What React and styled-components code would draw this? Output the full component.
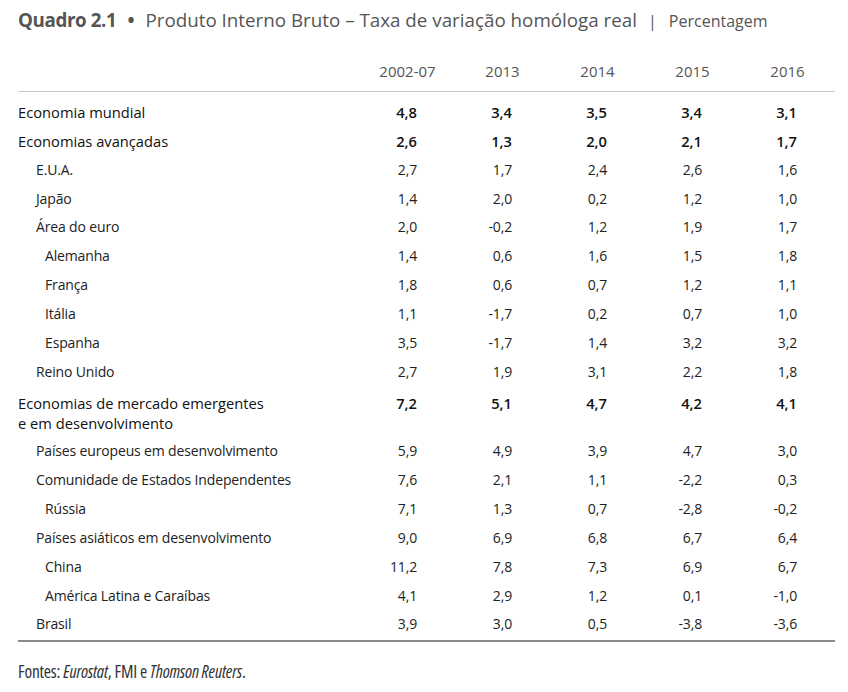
import React from "react";
import styled, { createGlobalStyle } from "styled-components";

const Global = createGlobalStyle`
  html, body { margin: 0; padding: 0; background: #fff; }
  body { font-family: "Open Sans", "Liberation Sans", sans-serif; color: #222; }
`;

const Page = styled.div`
  padding: 7px 0 0 18px;
  width: 817px;
`;

const Title = styled.h1`
  margin: 0;
  font-size: 18.8px;
  line-height: 26px;
  font-weight: 400;
  color: #555;
  display: flex;
  align-items: baseline;
  white-space: nowrap;
`;

const TitleNum = styled.span`
  font-weight: 700;
  letter-spacing: -0.4px;
`;

const Bullet = styled.span`
  margin: 0 11px;
  font-weight: 700;
`;

const Unit = styled.span`
  font-size: 16px;
  margin-left: 11px;
  &::before {
    content: "|";
    margin-right: 12px;
  }
`;

const Grid = styled.div`
  display: grid;
  grid-template-columns: 342px repeat(5, 95px);
  align-items: start;
`;

const Head = styled(Grid)`
  margin-top: 27px;
  border-bottom: 1px solid #c8c8c8;
  padding-bottom: 10px;
`;

const HeadCell = styled.div`
  font-size: 15px;
  line-height: 20px;
  color: #555;
  text-align: center;
`;

const Body = styled.div`
  padding: 5.5px 0 1.5px;
  border-bottom: 2px solid #8a8a8a;
`;

const Row = styled(Grid)`
  padding: ${(p) => (p.$tall ? "6.5px 0 4px" : "4.45px 0")};
  font-size: ${(p) => (p.$main ? "14.7px" : "14px")};
  letter-spacing: ${(p) => (p.$main ? "0" : "-0.15px")};
  line-height: 20px;
  color: ${(p) => (p.$main ? "#111" : "#222")};
`;

const Label = styled.div`
  padding-left: ${(p) => [0, 18, 27][p.$level]}px;
  white-space: pre-line;
`;

const Value = styled.div`
  text-align: right;
  padding-right: 38px;
  font-weight: ${(p) => (p.$strong ? 600 : 400)};
`;

const Note = styled.p`
  margin: 19px 0 0;
  font-size: 17.5px;
  line-height: 20px;
  color: #333;
  font-stretch: 75%;
  letter-spacing: -0.2px;
`;

const years = ["2002-07", "2013", "2014", "2015", "2016"];

const rows = [
  ["Economia mundial", 0, ["4,8", "3,4", "3,5", "3,4", "3,1"]],
  ["Economias avançadas", 0, ["2,6", "1,3", "2,0", "2,1", "1,7"]],
  ["E.U.A.", 1, ["2,7", "1,7", "2,4", "2,6", "1,6"]],
  ["Japão", 1, ["1,4", "2,0", "0,2", "1,2", "1,0"]],
  ["Área do euro", 1, ["2,0", "-0,2", "1,2", "1,9", "1,7"]],
  ["Alemanha", 2, ["1,4", "0,6", "1,6", "1,5", "1,8"]],
  ["França", 2, ["1,8", "0,6", "0,7", "1,2", "1,1"]],
  ["Itália", 2, ["1,1", "-1,7", "0,2", "0,7", "1,0"]],
  ["Espanha", 2, ["3,5", "-1,7", "1,4", "3,2", "3,2"]],
  ["Reino Unido", 1, ["2,7", "1,9", "3,1", "2,2", "1,8"]],
  ["Economias de mercado emergentes\ne em desenvolvimento", 0, ["7,2", "5,1", "4,7", "4,2", "4,1"], true],
  ["Países europeus em desenvolvimento", 1, ["5,9", "4,9", "3,9", "4,7", "3,0"]],
  ["Comunidade de Estados Independentes", 1, ["7,6", "2,1", "1,1", "-2,2", "0,3"]],
  ["Rússia", 2, ["7,1", "1,3", "0,7", "-2,8", "-0,2"]],
  ["Países asiáticos em desenvolvimento", 1, ["9,0", "6,9", "6,8", "6,7", "6,4"]],
  ["China", 2, ["11,2", "7,8", "7,3", "6,9", "6,7"]],
  ["América Latina e Caraíbas", 2, ["4,1", "2,9", "1,2", "0,1", "-1,0"]],
  ["Brasil", 1, ["3,9", "3,0", "0,5", "-3,8", "-3,6"]],
];

export default function App() {
  return (
    <Page>
      <Global />
      <Title>
        <TitleNum>Quadro 2.1</TitleNum>
        <Bullet>•</Bullet>
        <span>Produto Interno Bruto – Taxa de variação homóloga real</span>
        <Unit>Percentagem</Unit>
      </Title>
      <Head>
        <div />
        {years.map((y) => (
          <HeadCell key={y}>{y}</HeadCell>
        ))}
      </Head>
      <Body>
        {rows.map(([label, level, vals, tall]) => (
          <Row key={label} $tall={tall} $main={level === 0}>
            <Label $level={level}>{label}</Label>
            {vals.map((v, i) => (
              <Value key={i} $strong={level === 0}>
                {v}
              </Value>
            ))}
          </Row>
        ))}
      </Body>
      <Note>
        Fontes: <em>Eurostat</em>, FMI e <em>Thomson Reuters</em>.
      </Note>
    </Page>
  );
}
